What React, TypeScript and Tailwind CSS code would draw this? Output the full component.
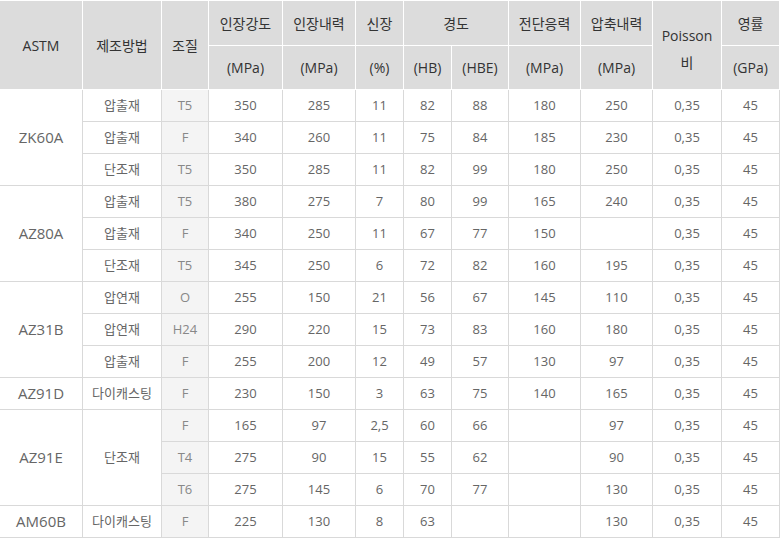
import React from 'react'

type Row = {
  astm?: string
  astmSpan?: number
  method?: string
  methodSpan?: number
  temper: string
  vals: string[]
}

const rows: Row[] = [
  { astm: 'ZK60A', astmSpan: 3, method: '압출재', temper: 'T5', vals: ['350', '285', '11', '82', '88', '180', '250', '0,35', '45'] },
  { method: '압출재', temper: 'F', vals: ['340', '260', '11', '75', '84', '185', '230', '0,35', '45'] },
  { method: '단조재', temper: 'T5', vals: ['350', '285', '11', '82', '99', '180', '250', '0,35', '45'] },
  { astm: 'AZ80A', astmSpan: 3, method: '압출재', temper: 'T5', vals: ['380', '275', '7', '80', '99', '165', '240', '0,35', '45'] },
  { method: '압출재', temper: 'F', vals: ['340', '250', '11', '67', '77', '150', '', '0,35', '45'] },
  { method: '단조재', temper: 'T5', vals: ['345', '250', '6', '72', '82', '160', '195', '0,35', '45'] },
  { astm: 'AZ31B', astmSpan: 3, method: '압연재', temper: 'O', vals: ['255', '150', '21', '56', '67', '145', '110', '0,35', '45'] },
  { method: '압연재', temper: 'H24', vals: ['290', '220', '15', '73', '83', '160', '180', '0,35', '45'] },
  { method: '압출재', temper: 'F', vals: ['255', '200', '12', '49', '57', '130', '97', '0,35', '45'] },
  { astm: 'AZ91D', astmSpan: 1, method: '다이캐스팅', temper: 'F', vals: ['230', '150', '3', '63', '75', '140', '165', '0,35', '45'] },
  { astm: 'AZ91E', astmSpan: 3, method: '단조재', methodSpan: 3, temper: 'F', vals: ['165', '97', '2,5', '60', '66', '', '97', '0,35', '45'] },
  { temper: 'T4', vals: ['275', '90', '15', '55', '62', '', '90', '0,35', '45'] },
  { temper: 'T6', vals: ['275', '145', '6', '70', '77', '', '130', '0,35', '45'] },
  { astm: 'AM60B', astmSpan: 1, method: '다이캐스팅', temper: 'F', vals: ['225', '130', '8', '63', '', '', '130', '0,35', '45'] },
]

const widths = [83, 79, 47, 74, 73, 48, 48, 57, 72, 72, 69, 58]

const th = 'border border-white bg-[#dcdcdc] text-[#333] font-normal text-[14px] text-center align-middle p-0'
const td = 'border border-[#d9d9d9] text-center align-middle p-0 text-[13px] text-[#666]'

export default function App() {
  return (
    <div className="w-[780px] h-[539px] overflow-hidden bg-white" style={{ fontFamily: '"Open Sans", "Noto Sans CJK KR", sans-serif' }}>
      <table className="table-fixed border-collapse w-[780px] -ml-px">
        <colgroup>
          {widths.map((w, i) => (
            <col key={i} style={{ width: w }} />
          ))}
        </colgroup>
        <thead>
          <tr className="h-[45px]">
            <th rowSpan={2} className={th}>ASTM</th>
            <th rowSpan={2} className={th}>제조방법</th>
            <th rowSpan={2} className={th}>조질</th>
            <th className={th}>인장강도</th>
            <th className={th}>인장내력</th>
            <th className={th}>신장</th>
            <th colSpan={2} className={th}>경도</th>
            <th className={th}>전단응력</th>
            <th className={th}>압축내력</th>
            <th rowSpan={2} className={`${th} pt-[8px]`}>
              <div className="h-[27px] leading-[27px]">Poisson</div>
              <div className="h-[27px] leading-[27px]">비</div>
            </th>
            <th className={th}>영률</th>
          </tr>
          <tr className="h-[44px]">
            <th className={th}>(MPa)</th>
            <th className={th}>(MPa)</th>
            <th className={th}>(%)</th>
            <th className={th}>(HB)</th>
            <th className={th}>(HBE)</th>
            <th className={th}>(MPa)</th>
            <th className={th}>(MPa)</th>
            <th className={th}>(GPa)</th>
          </tr>
        </thead>
        <tbody>
          {rows.map((r, i) => (
            <tr key={i} className="h-[32px]">
              {r.astm && (
                <td rowSpan={r.astmSpan} className={`${td} text-[15px] text-[#333]`}>{r.astm}</td>
              )}
              {r.method && (
                <td rowSpan={r.methodSpan ?? 1} className={`${td} text-[12px]`}>{r.method}</td>
              )}
              <td className={`${td} bg-[#f4f4f4] text-[#888]`}>{r.temper}</td>
              {r.vals.map((v, j) => (
                <td key={j} className={td}>{v}</td>
              ))}
            </tr>
          ))}
        </tbody>
      </table>
    </div>
  )
}
